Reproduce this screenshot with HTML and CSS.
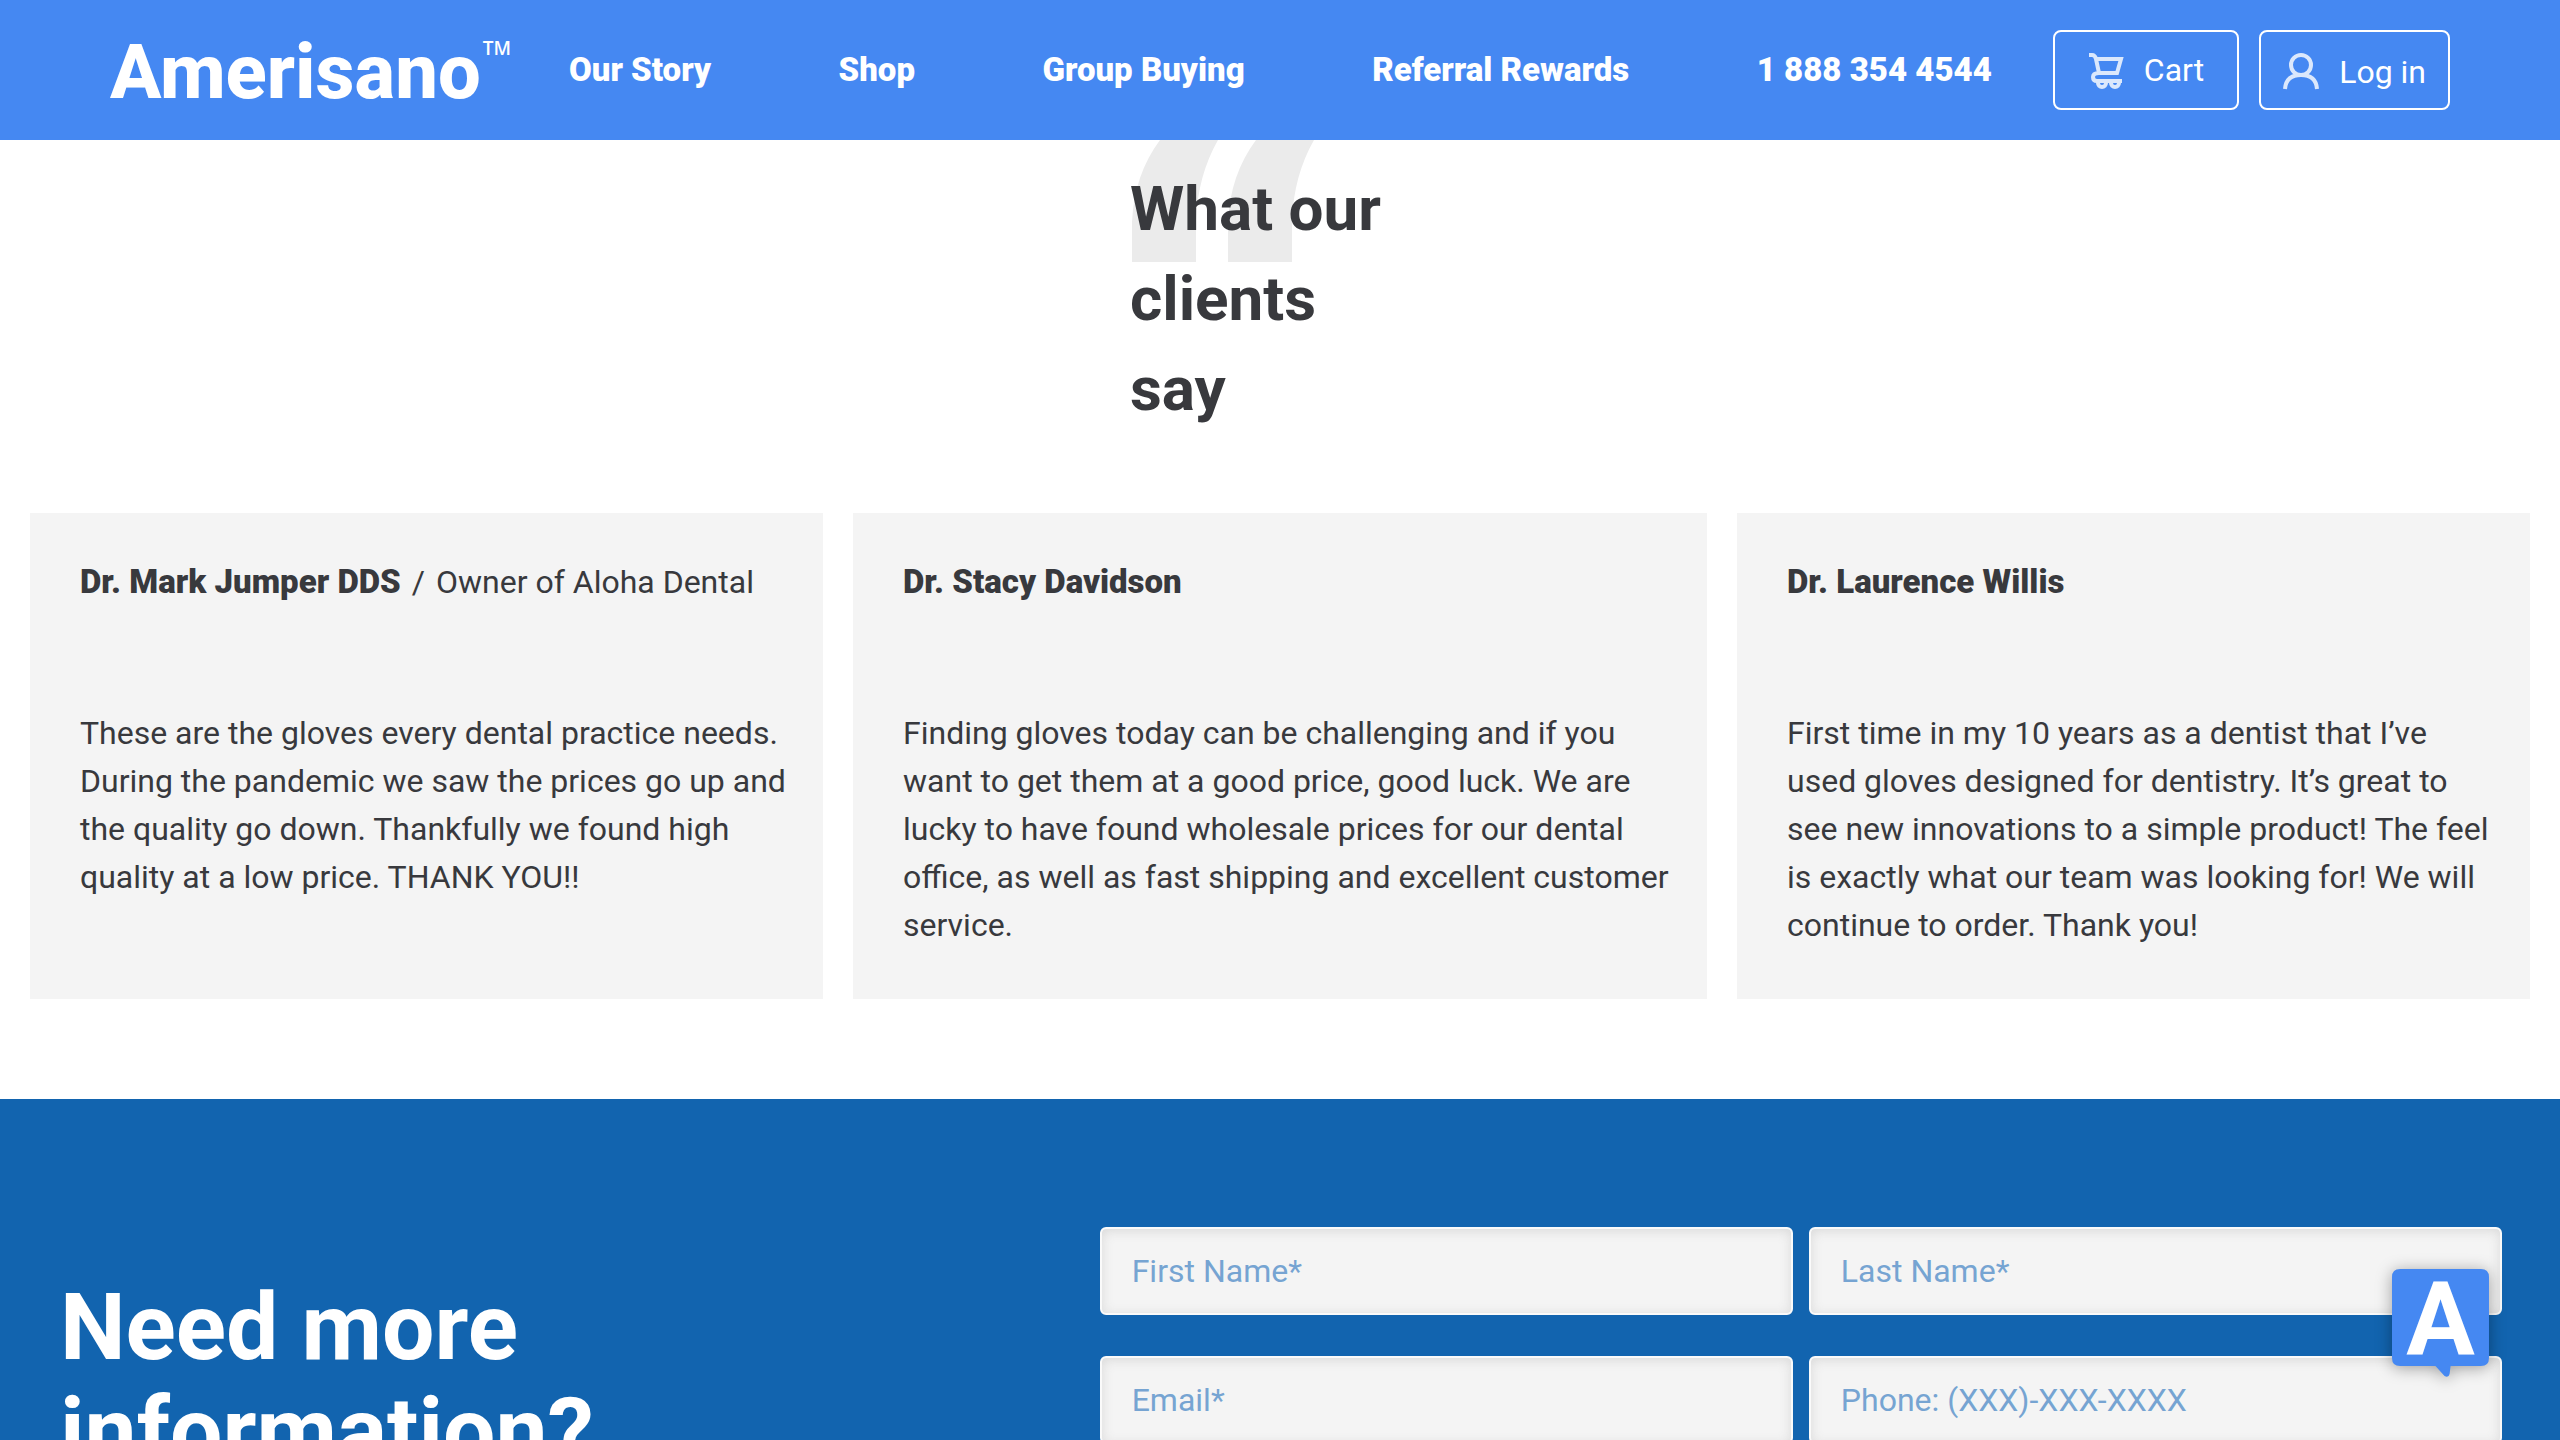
FILE: index.html
```html
<!DOCTYPE html>
<html lang="en">
<head>
<meta charset="utf-8">
<title>Amerisano</title>
<link rel="stylesheet" href="styles.css">
</head>
<body>
<header class="site-header">
  <a class="logo" href="#">Amerisano<sup class="logo-mark">TM</sup></a>
  <nav class="nav">
    <a href="#">Our Story</a>
    <a href="#">Shop</a>
    <a href="#">Group Buying</a>
    <a href="#">Referral Rewards</a>
    <a href="tel:18883544544">1 888 354 4544</a>
  </nav>
  <div class="actions">
    <button class="action action-cart" type="button">
      <svg class="icon" viewBox="0 0 36 38" aria-hidden="true"><path d="M1 4h3q3 0 4 4l3 14M7 8h26l-4 14H11q-6 0-6 4 0 4 4 4h25"/><path d="M10 30v2a4 4 0 0 0 8 0v-2M23 30v2a4 4 0 0 0 8 0v-2"/></svg>
      Cart
    </button>
    <button class="action action-login" type="button">
      <svg class="icon" viewBox="0 0 36 38" aria-hidden="true"><circle cx="18" cy="12" r="10"/><path d="M2 36q1-14 16-14t16 14"/></svg>
      Log in
    </button>
  </div>
</header>
<main>
  <section class="reviews">
    <div class="heading">
      <svg class="quote" viewBox="0 0 196 152" aria-hidden="true"><path d="M0 152V112Q2 65 28 30L54 0H112L86 30Q66 65 64 110V152ZM96 152V112Q98 65 124 30L150 0H208L182 30Q162 65 160 110V152Z"/></svg>
      <h2 class="heading-text">What our clients say</h2>
    </div>
    <div class="cards">
      <article class="card">
        <p class="author"><strong>Dr. Mark Jumper DDS</strong> <span>/</span> <span>Owner of Aloha Dental</span></p>
        <p>These are the gloves every dental practice needs. During the pandemic we saw the prices go up and the quality go down. Thankfully we found high quality at a low price. THANK YOU!!</p>
      </article>
      <article class="card">
        <p class="author"><strong>Dr. Stacy Davidson</strong></p>
        <p>Finding gloves today can be challenging and if you want to get them at a good price, good luck. We are lucky to have found wholesale prices for our dental office, as well as fast shipping and excellent customer service.</p>
      </article>
      <article class="card">
        <p class="author"><strong>Dr. Laurence Willis</strong></p>
        <p>First time in my 10 years as a dentist that I’ve used gloves designed for dentistry. It’s great to see new innovations to a simple product! The feel is exactly what our team was looking for! We will continue to order. Thank you!</p>
      </article>
    </div>
  </section>
  <section class="contact">
    <h2 class="contact-title">Need more information?</h2>
    <form class="form">
      <input type="text" placeholder="First Name*" aria-label="First Name">
      <input type="text" placeholder="Last Name*" aria-label="Last Name">
      <input type="email" placeholder="Email*" aria-label="Email">
      <input type="tel" placeholder="Phone: (XXX)-XXX-XXXX" aria-label="Phone">
    </form>
  </section>
</main>
<button class="chat" type="button" aria-label="Open chat">
  <svg class="chat-bubble" viewBox="0 0 96 107" aria-hidden="true"><path d="M8 0H88Q96 0 96 8V88Q96 96 88 96H58L57 104Q56 108 52 106L43 96H8Q0 96 0 88V8Q0 0 8 0Z"/></svg>
  <span class="chat-letter">A</span>
</button>
</body>
</html>
```
FILE: styles.css
```css
* { box-sizing: border-box; }
body {
  margin: 0;
  background: #fff;
  color: #38393d;
  font: 32px/48px Roboto, "Liberation Sans", sans-serif;
}
h2, p { margin: 0; }
a { color: inherit; text-decoration: none; }
button, input { font: inherit; }
strong { font-size: 33px; font-weight: 900; }

.site-header {
  position: sticky;
  top: 0;
  z-index: 2;
  display: flex;
  align-items: center;
  height: 140px;
  padding: 0 110px;
  background: #4588f2;
  color: #fff;
}
.logo {
  display: flex;
  align-items: flex-start;
  gap: 2px;
  padding-top: 4px;
  font: 800 76px/80px Roboto, sans-serif;
}
.logo-mark { font: 600 19px/32px "Open Sans", sans-serif; }
.nav {
  display: flex;
  flex: 1;
  justify-content: space-between;
  margin: 0 61px 0 58px;
  font-size: 33px;
  font-weight: 900;
}
.actions { display: flex; gap: 20px; }
.action {
  display: flex;
  align-items: center;
  gap: 20px;
  height: 80px;
  padding: 0 33px;
  border: 2px solid #fff;
  border-radius: 8px;
  background: none;
  color: #fff;
}
.action-login { padding: 4px 22px 0; }
.icon { width: 36px; height: 38px; fill: none; stroke: #dbe8fc; stroke-width: 4; }

.reviews { padding: 24px 30px 100px; }
.heading { position: relative; width: 300px; margin: 0 auto; }
.heading-text { position: relative; padding-right: 30px; font-size: 62px; line-height: 90px; font-weight: 700; }
.quote { position: absolute; left: 2px; top: -54px; width: 196px; height: 152px; fill: #ebebeb; overflow: visible; }

.cards { display: grid; grid-template-columns: 13fr 14fr 13fr; gap: 30px; margin-top: 79px; }
.card { padding: 45px 30px 50px 50px; background: #f4f4f4; }
.author { display: flex; align-items: baseline; gap: 11px; margin-bottom: 103px; }

.contact { display: grid; grid-template-columns: 5fr 7fr; column-gap: 38px; padding: 128px 58px 128px 60px; background: #1264af; }
.contact-title { max-width: 600px; padding-top: 49px; color: #fff; font-size: 93px; line-height: 104px; font-weight: 700; }
.form { display: grid; grid-template-columns: 1fr 1fr; align-content: start; gap: 41px 16px; }
.form input {
  width: 100%;
  height: 88px;
  padding: 0 30px;
  border: 2px solid #fafafa;
  border-radius: 6px;
  background: #f4f4f4;
  box-shadow: inset 0 2px 12px #d9d9d9;
}
.form input::placeholder { color: #76a4d2; opacity: 1; }

.chat { position: fixed; right: 71px; bottom: 64px; width: 97px; height: 107px; padding: 0; border: 0; background: none; color: #fff; }
.chat-bubble { position: absolute; inset: 0; fill: #4588f2; filter: drop-shadow(0 2px 8px rgba(0, 0, 0, .35)); overflow: visible; }
.chat-letter { position: absolute; inset: 0; font: 700 102px/101px Roboto, sans-serif; }
```
